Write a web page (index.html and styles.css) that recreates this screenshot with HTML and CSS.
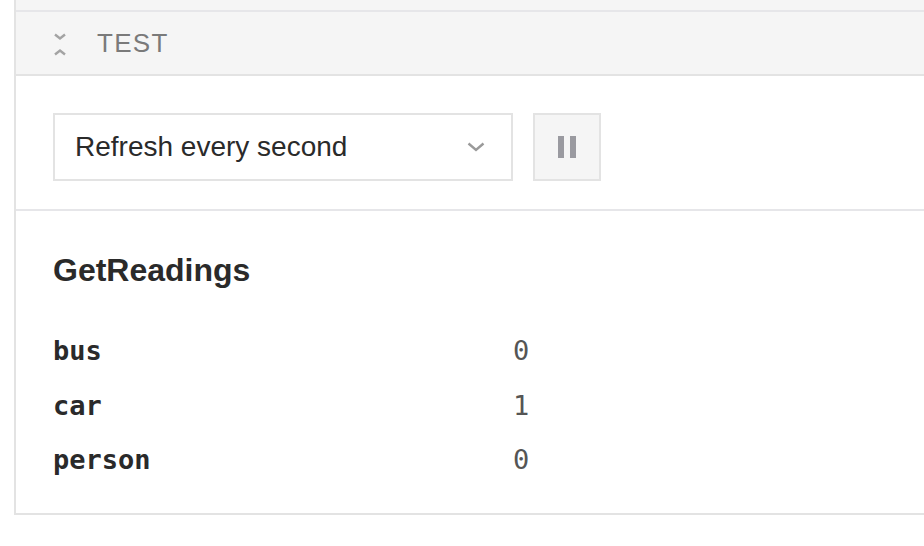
FILE: index.html
```html
<!DOCTYPE html>
<html>
<head>
<meta charset="utf-8">
<link rel="stylesheet" href="styles.css">
</head>
<body>
<div class="panel">
  <div class="top-strip"></div>
  <div class="header">
    <svg class="collapse" width="12" height="24" viewBox="0 0 12 24">
      <polyline points="1,1.5 6,5.5 11,1.5" fill="none" stroke="#a3a3a3" stroke-width="2.4"/>
      <polyline points="1,21.5 6,17.5 11,21.5" fill="none" stroke="#a3a3a3" stroke-width="2.4"/>
    </svg>
    <span class="title">TEST</span>
  </div>
  <div class="controls">
    <div class="select">
      <span class="select-text">Refresh every second</span>
      <svg class="chev" width="18" height="10" viewBox="0 0 18 10">
        <polyline points="1.5,1.5 9,8 16.5,1.5" fill="none" stroke="#9a9a9a" stroke-width="2.4"/>
      </svg>
    </div>
    <div class="pause">
      <span class="bar"></span><span class="bar"></span>
    </div>
  </div>
  <div class="readings">
    <h2 class="heading">GetReadings</h2>
    <div class="grid">
      <div class="key">bus</div><div class="val">0</div>
      <div class="key">car</div><div class="val">1</div>
      <div class="key">person</div><div class="val">0</div>
    </div>
  </div>
</div>
</body>
</html>
```

FILE: styles.css
```css
html, body {
  margin: 0;
  padding: 0;
  background: #ffffff;
}

.panel {
  margin-left: 14px;
  border-left: 2px solid #e3e3e3;
  border-bottom: 2px solid #e3e3e3;
  height: 515px;
  box-sizing: border-box;
  font-family: "Liberation Sans", Arial, sans-serif;
}

.top-strip {
  height: 10px;
  background: #f5f5f5;
  border-bottom: 2px solid #e6e6e9;
}

.header {
  height: 62px;
  background: #f5f5f5;
  border-bottom: 2px solid #e3e3e3;
  display: flex;
  align-items: center;
  padding-left: 38px;
  gap: 31px;
}

.collapse {
  display: block;
  margin-top: 3px;
}

.title {
  font-size: 26px;
  letter-spacing: 1.3px;
  color: #7a7a7a;
  line-height: 1;
}

.controls {
  display: flex;
  gap: 20px;
  padding: 37px 37px 28px;
  border-bottom: 2px solid #e6e6e9;
}

.select {
  box-sizing: border-box;
  width: 460px;
  height: 68px;
  border: 2px solid #e3e3e3;
  display: flex;
  align-items: center;
  justify-content: space-between;
  padding: 0 26px 0 20px;
}

.select-text {
  font-size: 28px;
  color: #2a2a2a;
}

.chev {
  display: block;
}

.pause {
  box-sizing: border-box;
  width: 68px;
  height: 68px;
  border: 2px solid #e3e3e3;
  background: #f5f5f5;
  display: flex;
  align-items: center;
  justify-content: center;
  gap: 6px;
}

.bar {
  width: 6px;
  height: 22px;
  background: #9a9aa0;
}

.readings {
  padding: 41px 37px 0;
}

.heading {
  margin: 0 0 45px;
  font-size: 32px;
  font-weight: bold;
  color: #2a2a2a;
  line-height: 36px;
}

.grid {
  display: grid;
  grid-template-columns: 460px auto;
  row-gap: 18.5px;
  font-family: "DejaVu Sans Mono", "Liberation Mono", monospace;
  font-size: 27px;
  line-height: 36px;
  font-variant-numeric: slashed-zero;
}

.key {
  font-weight: bold;
  color: #2a2a2a;
}

.val {
  color: #555555;
}
```
